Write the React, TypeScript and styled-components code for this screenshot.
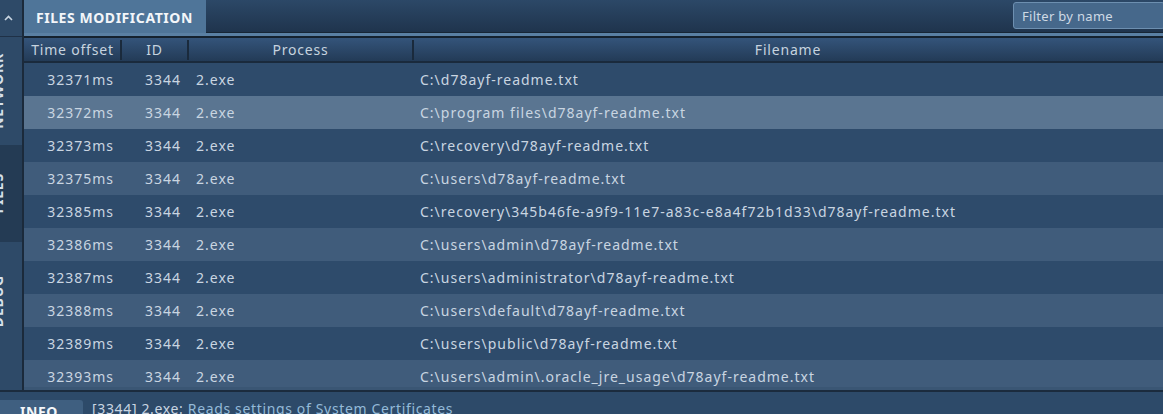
import React from "react";
import styled, { createGlobalStyle } from "styled-components";

const Global = createGlobalStyle`
  html, body { margin: 0; padding: 0; background: #2d4a69; overflow: hidden; }
  body { font-family: "Noto Sans", "Open Sans", sans-serif; }
  * { box-sizing: border-box; }
`;

const Page = styled.div`
  width: 1163px;
  height: 414px;
  display: flex;
  flex-direction: column;
  overflow: hidden;
  background: #2d4a69;
`;

const Main = styled.div`
  display: flex;
  height: 390px;
  flex: none;
`;

const Sidebar = styled.div`
  width: 24px;
  flex: none;
  display: flex;
  flex-direction: column;
  background: #2e4a68;
  border-right: 2px solid #1b2a3b;
`;

const Chevron = styled.div`
  height: 37px;
  flex: none;
  display: flex;
  align-items: center;
  justify-content: center;
  padding-right: 6px;
  border-bottom: 1px solid #1f3147;
`;

const SideTab = styled.div<{ $h: number; $active?: boolean }>`
  height: ${(p) => p.$h}px;
  flex: none;
  overflow: hidden;
  display: flex;
  align-items: center;
  background: ${(p) => (p.$active ? "#243b54" : "transparent")};
`;

const SideLabel = styled.span`
  writing-mode: vertical-rl;
  transform: rotate(180deg);
  font-size: 14px;
  font-weight: 700;
  color: #d6e0ea;
  letter-spacing: 0.8px;
  margin-left: -9px;
  line-height: 14px;
`;

const Content = styled.div`
  flex: 1;
  display: flex;
  flex-direction: column;
  min-width: 0;
`;

const TopBar = styled.div`
  height: 33px;
  flex: none;
  display: flex;
  align-items: stretch;
  background: linear-gradient(#2c4867, #1f344d);
  border-bottom: 1px solid #172636;
`;

const PanelTab = styled.div`
  width: 182px;
  margin-bottom: -1px;
  background: #4f7599;
  color: #f3f6f9;
  font-weight: 700;
  font-size: 14px;
  letter-spacing: 0.55px;
  display: flex;
  align-items: center;
  padding-left: 12px;
  padding-top: 2px;
`;

const Spacer = styled.div`
  flex: 1;
`;

const Filter = styled.div`
  width: 152px;
  margin: 2px -2px 3px 0;
  background: #46688b;
  border: 1px solid #6d8fb0;
  border-radius: 3px;
  color: #cfdae5;
  font-size: 13px;
  letter-spacing: 0.3px;
  display: flex;
  align-items: center;
  padding-left: 8px;
`;

const Accent = styled.div`
  height: 5px;
  flex: none;
  background: #5a80a4;
  border-bottom: 2px solid #15222f;
`;

const HeaderRow = styled.div`
  height: 25px;
  flex: none;
  display: flex;
  background: linear-gradient(#34547a, #233b57);
  border-bottom: 2px solid #1a2a3c;
`;

const HeadCell = styled.div<{ $w?: number; $last?: boolean }>`
  ${(p) => (p.$w ? `width: ${p.$w}px; flex: none;` : "flex: 1;")}
  display: flex;
  align-items: center;
  justify-content: center;
  font-size: 14px;
  letter-spacing: 0.8px;
  color: #c6d3df;
  position: relative;
  &::after {
    content: "";
    display: ${(p) => (p.$last ? "none" : "block")};
    position: absolute;
    right: -1px;
    top: 2px;
    bottom: 1px;
    width: 2px;
    background: #1a2a3c;
  }
`;

const Body = styled.div`
  flex: 1;
  overflow: hidden;
  border-bottom: 3px solid #3a5674;
`;

const Row = styled.div<{ $even: boolean; $selected: boolean }>`
  height: 33px;
  display: flex;
  align-items: center;
  font-size: 14px;
  letter-spacing: 1px;
  color: #c9d5e1;
  background: ${(p) => (p.$selected ? "#5a7591" : p.$even ? "#405c7b" : "#2e4b6b")};
`;

const Cell = styled.div<{ $w?: number; $right?: boolean; $pad: number }>`
  ${(p) => (p.$w ? `width: ${p.$w}px; flex: none;` : "flex: 1;")}
  text-align: ${(p) => (p.$right ? "right" : "left")};
  ${(p) => (p.$right ? `padding-right: ${p.$pad}px;` : `padding-left: ${p.$pad}px;`)}
  white-space: nowrap;
  overflow: hidden;
`;

const Divider = styled.div`
  height: 2px;
  flex: none;
  background: #1b2b3d;
`;

const BottomBar = styled.div`
  flex: 1;
  display: flex;
  align-items: flex-start;
  padding-top: 8px;
  background: #2d4a69;
`;

const InfoTab = styled.div`
  width: 83px;
  height: 30px;
  flex: none;
  background: #3f5f80;
  border-radius: 0 3px 0 0;
  color: #f3f6f9;
  font-weight: 700;
  font-size: 14px;
  letter-spacing: 0.6px;
  padding-left: 20px;
  padding-top: 2px;
  line-height: 20px;
`;

const Message = styled.div`
  margin-left: 9px;
  font-size: 14px;
  letter-spacing: 0.65px;
  line-height: 20px;
  color: #c9d5e1;
  white-space: nowrap;
  margin-top: -1px;
`;

const Highlight = styled.span`
  color: #94bad8;
`;

const rows: [string, string][] = [
  ["32371ms", "C:\\d78ayf-readme.txt"],
  ["32372ms", "C:\\program files\\d78ayf-readme.txt"],
  ["32373ms", "C:\\recovery\\d78ayf-readme.txt"],
  ["32375ms", "C:\\users\\d78ayf-readme.txt"],
  ["32385ms", "C:\\recovery\\345b46fe-a9f9-11e7-a83c-e8a4f72b1d33\\d78ayf-readme.txt"],
  ["32386ms", "C:\\users\\admin\\d78ayf-readme.txt"],
  ["32387ms", "C:\\users\\administrator\\d78ayf-readme.txt"],
  ["32388ms", "C:\\users\\default\\d78ayf-readme.txt"],
  ["32389ms", "C:\\users\\public\\d78ayf-readme.txt"],
  ["32393ms", "C:\\users\\admin\\.oracle_jre_usage\\d78ayf-readme.txt"],
];

export default function App() {
  return (
    <Page>
      <Global />
      <Main>
        <Sidebar>
          <Chevron>
            <svg width="9" height="6" viewBox="0 0 9 6">
              <polyline points="1,5 4.5,1.5 8,5" fill="none" stroke="#c9d5e1" strokeWidth="1.6" />
            </svg>
          </Chevron>
          <SideTab $h={108}>
            <SideLabel>NETWORK</SideLabel>
          </SideTab>
          <SideTab $h={97} $active>
            <SideLabel>FILES</SideLabel>
          </SideTab>
          <SideTab $h={118}>
            <SideLabel>DEBUG</SideLabel>
          </SideTab>
        </Sidebar>
        <Content>
          <TopBar>
            <PanelTab>FILES MODIFICATION</PanelTab>
            <Spacer />
            <Filter>Filter by name</Filter>
          </TopBar>
          <Accent />
          <HeaderRow>
            <HeadCell $w={97}>Time offset</HeadCell>
            <HeadCell $w={67}>ID</HeadCell>
            <HeadCell $w={225}>Process</HeadCell>
            <HeadCell $last>Filename</HeadCell>
          </HeaderRow>
          <Body>
            {rows.map(([t, f], i) => (
              <Row key={t} $even={i % 2 === 1} $selected={i === 1}>
                <Cell $w={97} $right $pad={7}>{t}</Cell>
                <Cell $w={67} $right $pad={7}>3344</Cell>
                <Cell $w={225} $pad={8}>2.exe</Cell>
                <Cell $pad={7}>{f}</Cell>
              </Row>
            ))}
          </Body>
        </Content>
      </Main>
      <Divider />
      <BottomBar>
        <InfoTab>INFO</InfoTab>
        <Message>
          [3344] 2.exe: <Highlight>Reads settings of System Certificates</Highlight>
        </Message>
      </BottomBar>
    </Page>
  );
}
